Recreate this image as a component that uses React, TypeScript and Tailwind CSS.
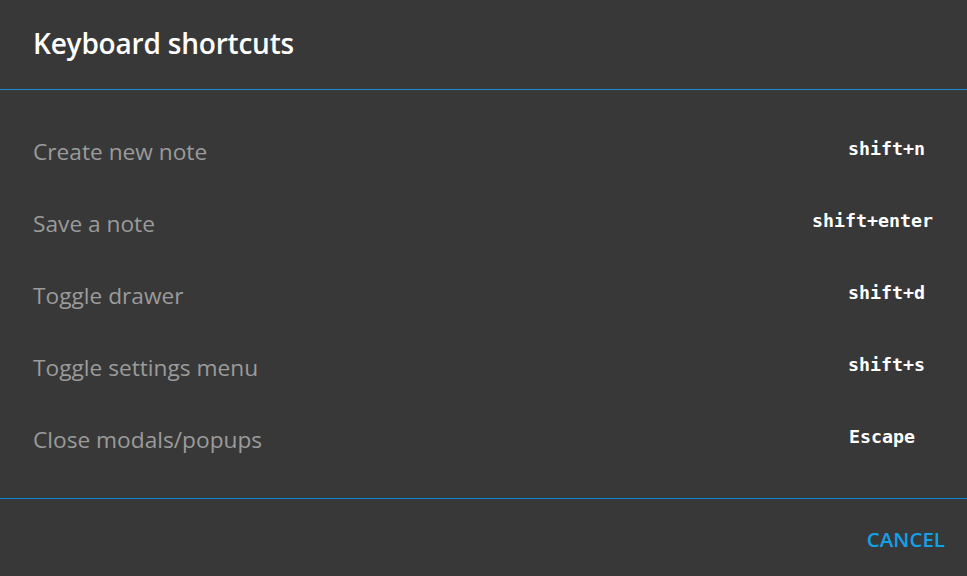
const shortcuts = [
  { label: "Create new note", keys: "shift+n", pad: "pl-[36px]" },
  { label: "Save a note", keys: "shift+enter", pad: "pl-0" },
  { label: "Toggle drawer", keys: "shift+d", pad: "pl-[36px]" },
  { label: "Toggle settings menu", keys: "shift+s", pad: "pl-[36px]" },
  { label: "Close modals/popups", keys: "Escape", pad: "pl-[37px]" },
];

export default function App() {
  return (
    <div
      className="flex h-[576px] w-[967px] flex-col bg-[#383838]"
      style={{ fontFamily: '"Open Sans", "Noto Sans", sans-serif' }}
    >
      <header className="flex h-[90px] items-center border-b border-[#1a88d0] px-[33px] pb-[4px]">
        <h1 className="text-[28px] font-semibold tracking-[-0.2px] text-white">Keyboard shortcuts</h1>
      </header>

      <div className="flex h-[409px] flex-col border-b border-[#0b86d6] pt-[26px] pb-[22px]">
        {shortcuts.map((s) => (
          <div key={s.label} className="flex h-[72px] items-center justify-between pl-[33px] pr-[34px]">
            <span className="text-[22.7px] text-[#9b9b9b]">{s.label}</span>
            <span
              className={`w-[121px] -translate-y-[3px] text-[18.3px] font-bold text-white ${s.pad}`}
              style={{ fontFamily: '"DejaVu Sans Mono", "Liberation Mono", monospace' }}
            >
              {s.keys}
            </span>
          </div>
        ))}
      </div>

      <footer className="flex flex-1 items-center justify-end pr-[22px] pt-[4px]">
        <button className="text-[20.5px] font-semibold uppercase text-[#14a0e6]">Cancel</button>
      </footer>
    </div>
  );
}
